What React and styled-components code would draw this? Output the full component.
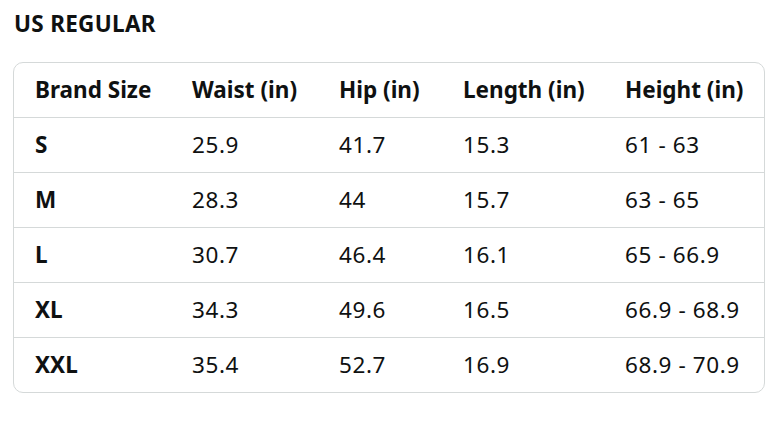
import React from "react";
import styled, { createGlobalStyle } from "styled-components";

const GlobalStyle = createGlobalStyle`
  body {
    margin: 0;
    background: #ffffff;
    font-family: "Noto Sans", "Open Sans", Arial, sans-serif;
    color: #0f1111;
  }
`;

const columns = ["Brand Size", "Waist (in)", "Hip (in)", "Length (in)", "Height (in)"];

const rows = [
  ["S", "25.9", "41.7", "15.3", "61 - 63"],
  ["M", "28.3", "44", "15.7", "63 - 65"],
  ["L", "30.7", "46.4", "16.1", "65 - 66.9"],
  ["XL", "34.3", "49.6", "16.5", "66.9 - 68.9"],
  ["XXL", "35.4", "52.7", "16.9", "68.9 - 70.9"],
];

function App() {
  return (
    <Page>
      <GlobalStyle />
      <Title>US REGULAR</Title>
      <Card>
        <Row>
          {columns.map((c) => (
            <Cell key={c} $bold>
              {c}
            </Cell>
          ))}
        </Row>
        {rows.map((r) => (
          <Row key={r[0]}>
            {r.map((v, i) => (
              <Cell key={i} $bold={i === 0}>
                {v}
              </Cell>
            ))}
          </Row>
        ))}
      </Card>
    </Page>
  );
}

const Page = styled.div`
  width: 781px;
  height: 430px;
  padding: 9px 16px 0 13px;
  box-sizing: border-box;
`;

const Title = styled.h2`
  margin: 0 0 0 1px;
  font-size: 22.5px;
  font-weight: 700;
  line-height: 30px;
  letter-spacing: 0.3px;
`;

const Card = styled.div`
  margin-top: 23px;
  border: 1px solid #d5d9d9;
  border-radius: 10px;
  overflow: hidden;
`;

const Row = styled.div`
  display: grid;
  grid-template-columns: 157px 147px 124px 162px 1fr;
  height: 54px;
  align-items: center;
  & + & {
    border-top: 1px solid #d5d9d9;
  }
`;

const Cell = styled.div`
  padding-left: 21px;
  padding-bottom: 2px;
  font-size: 22.5px;
  font-weight: ${(p) => (p.$bold ? 700 : 400)};
  letter-spacing: ${(p) => (p.$bold ? "0" : "0.6px")};
  white-space: nowrap;
`;

export default App;
